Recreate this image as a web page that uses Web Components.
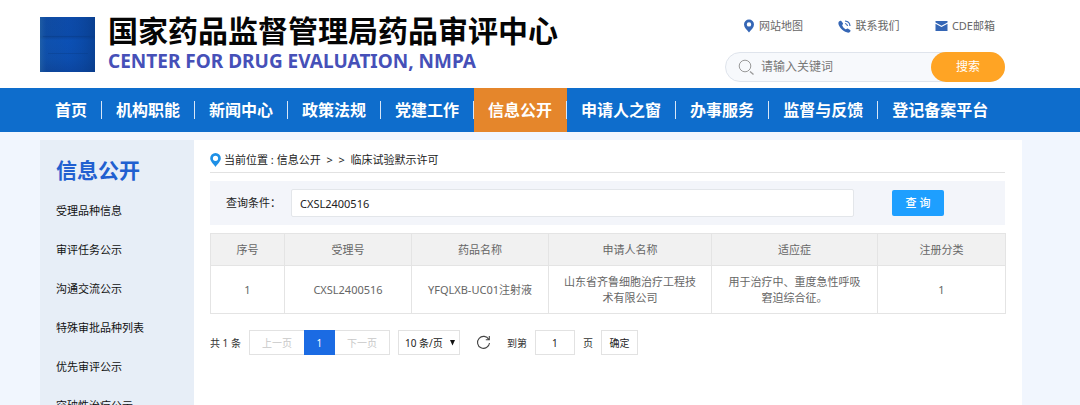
<!DOCTYPE html>
<html lang="zh-CN">
<head>
<meta charset="utf-8">
<title>国家药品监督管理局药品审评中心</title>
<style>
  body { margin: 0; background: #f1f6fe; color: #333; font: 11px/16px "Noto Sans", "Noto Sans CJK SC", sans-serif; }
</style>
</head>
<body>
<cde-page></cde-page>

<template id="t-page">
  <style>
    :host { display: block; }
    .columns { display: flex; align-items: stretch; margin: 8px 58px 0 40px; }
    main { flex: 1; min-width: 0; padding: 12px 17px 24px 16px; background: #fff; }
  </style>
  <cde-header></cde-header>
  <cde-nav></cde-nav>
  <div class="columns">
    <cde-sidebar heading="信息公开"></cde-sidebar>
    <main>
      <cde-breadcrumb>当前位置 : 信息公开 &nbsp;&gt; &nbsp;&gt; &nbsp;临床试验默示许可</cde-breadcrumb>
      <cde-query></cde-query>
      <cde-results></cde-results>
      <cde-pager></cde-pager>
    </main>
  </div>
</template>

<template id="t-header">
  <style>
    :host { display: flex; justify-content: space-between; align-items: flex-start; box-sizing: border-box; min-height: 88px; padding: 16px 75px 6px 40px; background: #fff; }
    .brand { display: flex; align-items: flex-start; gap: 13px; }
    .logo { display: block; margin-top: 1px; }
    h1 { margin: 0; font-size: 30px; line-height: 30px; font-weight: 700; color: #050505; }
    .en { margin: 2px 0 0; font-family: "Noto Sans", sans-serif; font-size: 19px; line-height: 26px; font-weight: 700; color: #4650b8; }
    .side { display: flex; flex-direction: column; align-items: flex-end; gap: 18px; width: 280px; padding-top: 2px; }
    .links { display: flex; justify-content: space-between; width: 252px; margin-right: 10px; }
    form { display: flex; align-items: center; align-self: stretch; box-sizing: border-box; height: 30px; background: #f7f9fc; border: 1px solid #dfe4ec; border-radius: 15px; }
    form svg { margin: 0 6px 0 12px; flex: none; }
    input { flex: 1; min-width: 0; padding: 0; border: 0; outline: 0; background: none; font: inherit; font-size: 12px; color: #666; }
    input::placeholder { color: #777; opacity: 1; }
    button { flex: none; width: 74px; height: 30px; margin-right: -1px; padding: 0; border: 0; border-radius: 15px; background: #ffa424; color: #fff; font: inherit; font-size: 12px; }
  </style>
  <div class="brand">
    <svg class="logo" width="55" height="55" viewBox="0 0 55 55" aria-hidden="true">
      <defs>
        <linearGradient id="g" x1="0" y1="0" x2="0" y2="1"><stop offset="0" stop-color="#0d47a0"/><stop offset=".33" stop-color="#0b469f"/><stop offset=".36" stop-color="#0a3f91"/><stop offset=".42" stop-color="#0b4eb0"/><stop offset=".75" stop-color="#0c4ba8"/><stop offset="1" stop-color="#0b3f93"/></linearGradient>
        <linearGradient id="h"><stop offset="0" stop-color="#2c6aa5"/><stop offset=".12" stop-color="#1a5aa8" stop-opacity=".4"/><stop offset=".5" stop-color="#0d55c0" stop-opacity=".5"/><stop offset="1" stop-color="#083a85"/></linearGradient>
      </defs>
      <path fill="url(#g)" d="M0 0h55v55H0z"/><path fill="url(#h)" opacity=".6" d="M0 0h55v55H0z"/>
      <path stroke="#083b88" stroke-opacity=".4" d="M3 19.500h47M8 36.500h40"/>
    </svg>
    <div>
      <h1>国家药品监督管理局药品审评中心</h1>
      <p class="en">CENTER FOR DRUG EVALUATION, NMPA</p>
    </div>
  </div>
  <div class="side">
    <div class="links">
      <cde-icon-link><svg slot="icon" width="12" height="14" viewBox="0 0 12 14"><path fill="#3566b5" fill-rule="evenodd" d="M6 .5a5 5 0 0 1 5 5C11 8.500 8 11 6 13.500 4 11 1 8.500 1 5.500a5 5 0 0 1 5-5zm0 2.700a2.200 2.200 0 1 0 0 4.400 2.200 2.200 0 0 0 0-4.400z"/></svg>网站地图</cde-icon-link>
      <cde-icon-link><svg slot="icon" width="13" height="13" viewBox="0 0 13 13"><path fill="#3566b5" d="M.8 1.700C1.800.6 2.700.4 3.300 1l1.500 2.100c.4.6.2 1.100-.5 1.800-.4.400.8 2.200 1.700 3 .9.800 1.900 1.500 2.300 1.200.8-.7 1.200-.8 1.800-.4l2 1.400c.7.5.5 1.300-.5 2.200C8.200 14.500-1.800 6 .8 1.700z"/><path fill="none" stroke="#3566b5" stroke-width="1.200" d="M7 1c2.800.2 4.800 2.200 5 5M7 3.500c1.400.2 2.300 1.100 2.500 2.500"/></svg>联系我们</cde-icon-link>
      <cde-icon-link><svg slot="icon" width="13" height="10" viewBox="0 0 13 10"><path fill="#3566b5" d="M.5 0h12v1.500l-6 3.300-6-3.300zM.5 2.700l6 3.300 6-3.300V10H.5z"/></svg>CDE邮箱</cde-icon-link>
    </div>
    <form role="search">
      <svg width="17" height="17" viewBox="0 0 17 17" fill="none" stroke="#999"><circle cx="7" cy="7" r="5.800"/><path stroke-width="1.300" d="M12 12.500l3.500 3"/></svg>
      <input type="text" placeholder="请输入关键词" aria-label="请输入关键词">
      <button type="button">搜索</button>
    </form>
  </div>
</template>

<template id="t-icon-link">
  <style>
    :host { display: block; }
    a { display: flex; align-items: center; gap: 4px; color: #666; text-decoration: none; }
  </style>
  <a href="#"><slot name="icon"></slot><span><slot></slot></span></a>
</template>

<template id="t-nav">
  <style>
    :host { display: block; background: #0e6dcc; }
    nav { display: flex; padding-left: 41px; }
    a { position: relative; padding: 0 14px; border-right: 1px solid transparent; font-size: 16px; line-height: 44px; font-weight: 700; color: #fff; text-decoration: none; white-space: nowrap; }
    a.on { background: #e5862b; }
    a:not(:last-child)::after { content: ""; position: absolute; right: -1px; top: 13px; width: 1px; height: 18px; background: #d7e6f7; }
  </style>
  <nav></nav>
</template>

<template id="t-sidebar">
  <style>
    :host { display: block; flex: none; box-sizing: border-box; width: 154px; padding: 15px 16px 0; background: #e7eef7; }
    h2 { margin: 0 0 14px; font-size: 21px; line-height: 30px; font-weight: 700; color: #2160d0; }
    ul { margin: 0; padding: 0; list-style: none; }
    li { padding-bottom: 15px; }
    a { display: block; line-height: 24px; color: #111; text-decoration: none; }
  </style>
  <h2></h2>
  <ul></ul>
</template>

<template id="t-breadcrumb">
  <style>
    :host { display: flex; align-items: center; gap: 3px; padding-bottom: 4px; border-bottom: 1px solid #e2e2e2; color: #222; }
  </style>
  <svg width="11" height="14" viewBox="0 0 11 14" aria-hidden="true"><path fill="#1e90e6" fill-rule="evenodd" d="M5.500 0A5.300 5.300 0 0 1 10.800 5.300C10.800 8.500 7.500 11 5.500 14 3.500 11 .2 8.500.2 5.300A5.300 5.300 0 0 1 5.500 0zm0 2.700a2.600 2.600 0 1 0 0 5.200 2.600 2.600 0 0 0 0-5.200z"/></svg>
  <span><slot></slot></span>
</template>

<template id="t-query">
  <style>
    :host { display: block; margin: 8px 0; background: #f3f5fa; }
    form { display: flex; align-items: center; padding: 8px 61px 8px 16px; }
    label { flex: none; width: 65px; color: #222; }
    input { flex: 1; min-width: 0; box-sizing: border-box; height: 28px; margin-right: 38px; padding: 0 8px; border: 1px solid #e3e6ea; border-radius: 2px; background: #fff; outline: 0; font: inherit; color: #222; }
    button { flex: none; width: 52px; height: 26px; padding: 0; border: 0; border-radius: 2px; background: #1e9fff; color: #fff; font: inherit; font-weight: 500; white-space: pre; }
  </style>
  <form>
    <label for="q">查询条件：</label>
    <input id="q" type="text" value="CXSL2400516">
    <button type="button">查 询</button>
  </form>
</template>

<template id="t-results">
  <style>
    :host { display: block; }
    table { width: 100%; table-layout: fixed; border-collapse: collapse; color: #666; text-align: center; }
    th, td { padding: 0 12px; border: 1px solid #e4e4e4; }
    th { height: 31px; background: #f1f1f1; font-weight: 400; }
    td { height: 47px; }
    .name { padding: 0 8px; }
  </style>
  <table>
    <colgroup><col style="width:74px"><col style="width:127px"><col style="width:137px"><col style="width:163px"><col style="width:166px"><col style="width:128px"></colgroup>
    <thead><tr><th>序号</th><th>受理号</th><th>药品名称</th><th>申请人名称</th><th>适应症</th><th>注册分类</th></tr></thead>
    <tbody><tr><td>1</td><td>CXSL2400516</td><td class="name">YFQLXB-UC01注射液</td><td>山东省齐鲁细胞治疗工程技术有限公司</td><td>用于治疗中、重度急性呼吸窘迫综合征。</td><td>1</td></tr></tbody>
  </table>
</template>

<template id="t-pager">
  <style>
    :host { display: flex; align-items: center; gap: 8px; margin-top: 16px; font-size: 10px; color: #333; white-space: nowrap; }
    .pages { display: flex; }
    button, input, select { box-sizing: border-box; height: 25px; margin: 0; padding: 0; border: 1px solid #e2e2e2; border-radius: 0; background: #fff; outline: 0; font: inherit; color: #222; text-align: center; }
    .step { width: 55px; color: #c8c8c8; }
    .step.prev { border-right: 0; }
    .step.next { border-left: 0; }
    .now { width: 31px; border-color: #1b6be3; background: #1b6be3; color: #fff; }
    .size { display: grid; align-items: center; }
    .size > * { grid-area: 1 / 1; }
    select { width: 62px; padding-left: 6px; appearance: none; text-align: left; }
    .size svg { justify-self: end; margin-right: 5px; pointer-events: none; }
    .reload { display: flex; align-items: center; justify-content: center; width: 31px; border: 0; }
    label { display: flex; align-items: center; gap: 8px; }
    label input { width: 40px; }
    .go { width: 37px; }
  </style>
  <span>共 1 条</span>
  <div class="pages"><button class="step prev" disabled>上一页</button><button class="now">1</button><button class="step next" disabled>下一页</button></div>
  <div class="size">
    <select aria-label="每页条数"><option>10 条/页</option></select>
    <svg width="5" height="6" viewBox="0 0 5 6"><path fill="#111" d="M0 0h5L2.500 5.500z"/></svg>
  </div>
  <button class="reload" aria-label="刷新"><svg width="15" height="15" viewBox="0 0 15 15" fill="none" stroke="#444" stroke-width="1.100"><path d="M12.800 4.500A6 6 0 1 0 13.500 8M13.300 1v3.800H9.800"/></svg></button>
  <label>到第<input type="text" value="1">页</label>
  <button class="go">确定</button>
</template>

<script>
  class TemplateElement extends HTMLElement {
    constructor() {
      super();
      const root = this.attachShadow({ mode: "open" });
      root.append(document.getElementById(this.constructor.template).content.cloneNode(true));
    }
  }

  const define = (name) => customElements.define("cde-" + name, class extends TemplateElement {
    static template = "t-" + name;
  });

  function link(text) {
    const a = document.createElement("a");
    a.href = "#";
    a.textContent = text;
    return a;
  }

  class CdeNav extends TemplateElement {
    static template = "t-nav";
    static items = ["首页", "机构职能", "新闻中心", "政策法规", "党建工作", "信息公开", "申请人之窗", "办事服务", "监督与反馈", "登记备案平台"];
    connectedCallback() {
      const links = CdeNav.items.map(link);
      links[5].className = "on";
      this.shadowRoot.querySelector("nav").replaceChildren(...links);
    }
  }

  class CdeSidebar extends TemplateElement {
    static template = "t-sidebar";
    static items = ["受理品种信息", "审评任务公示", "沟通交流公示", "特殊审批品种列表", "优先审评公示", "突破性治疗公示"];
    connectedCallback() {
      this.shadowRoot.querySelector("h2").textContent = this.getAttribute("heading");
      this.shadowRoot.querySelector("ul").replaceChildren(...CdeSidebar.items.map((text) => {
        const li = document.createElement("li");
        li.append(link(text));
        return li;
      }));
    }
  }

  ["icon-link", "header", "breadcrumb", "query", "results", "pager"].forEach(define);
  customElements.define("cde-nav", CdeNav);
  customElements.define("cde-sidebar", CdeSidebar);
  define("page");
</script>
</body>
</html>
